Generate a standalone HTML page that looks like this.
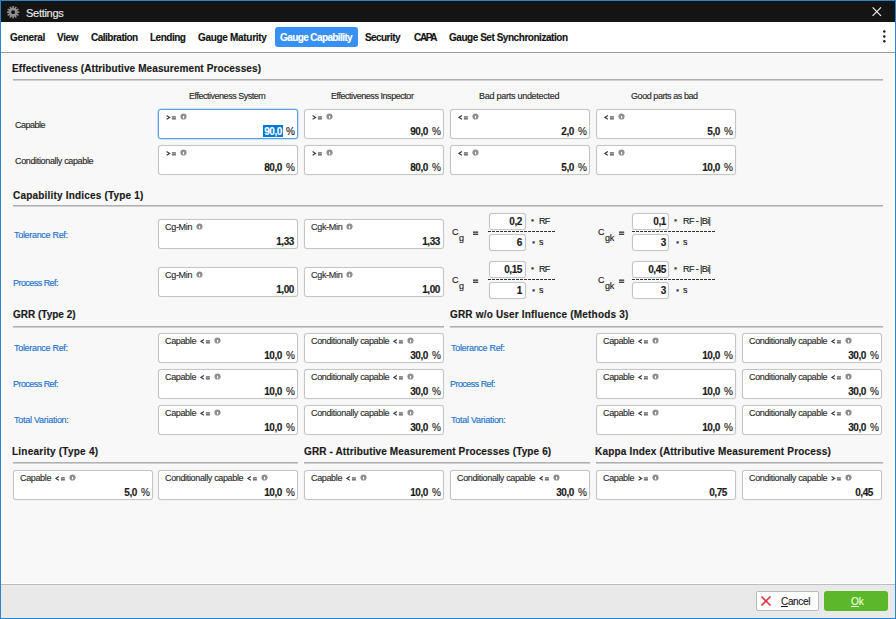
<!DOCTYPE html><html><head><meta charset="utf-8"><title>Settings</title><style>
*{margin:0;padding:0;box-sizing:border-box}
html,body{width:896px;height:619px;overflow:hidden;background:#f8f8f8}
body{position:relative;font-family:"Liberation Sans",sans-serif}
.t{position:absolute;white-space:nowrap;line-height:20px;-webkit-text-stroke:0.15px currentColor}
.ic{position:absolute}
.bx{position:absolute;background:#fff;border:1px solid #c5c5c5;border-radius:3px;box-shadow:0 0 1px rgba(0,0,0,.18)}
.bx.f{border-color:#5ea0e4;box-shadow:0 0 0 0.6px rgba(94,160,228,.55)}
.ln{position:absolute;height:1px;background:#b0b0b0;box-shadow:0 1px 0 #cfcfcf}
</style></head><body>
<div style="position:absolute;left:0;top:0;width:896px;height:619px;border:1px solid #2b83c9"></div>
<div style="position:absolute;left:1px;top:1px;width:894px;height:21px;background:#141414"></div>
<svg style="position:absolute;left:6px;top:5px" width="14" height="14" viewBox="0 0 14 14"><g fill="#8e8e8e" transform="translate(7.1 7.2)"><rect x="-0.8" y="-6.2" width="1.6" height="2.4" transform="rotate(0)"/><rect x="-0.8" y="-6.2" width="1.6" height="2.4" transform="rotate(30)"/><rect x="-0.8" y="-6.2" width="1.6" height="2.4" transform="rotate(60)"/><rect x="-0.8" y="-6.2" width="1.6" height="2.4" transform="rotate(90)"/><rect x="-0.8" y="-6.2" width="1.6" height="2.4" transform="rotate(120)"/><rect x="-0.8" y="-6.2" width="1.6" height="2.4" transform="rotate(150)"/><rect x="-0.8" y="-6.2" width="1.6" height="2.4" transform="rotate(180)"/><rect x="-0.8" y="-6.2" width="1.6" height="2.4" transform="rotate(210)"/><rect x="-0.8" y="-6.2" width="1.6" height="2.4" transform="rotate(240)"/><rect x="-0.8" y="-6.2" width="1.6" height="2.4" transform="rotate(270)"/><rect x="-0.8" y="-6.2" width="1.6" height="2.4" transform="rotate(300)"/><rect x="-0.8" y="-6.2" width="1.6" height="2.4" transform="rotate(330)"/><circle r="4.5"/></g><circle cx="7.1" cy="7.2" r="1.9" fill="#121212"/></svg>
<div class="t" style="left:26px;top:3px;font-size:11px;font-weight:normal;letter-spacing:-0.286px;color:#e8e8e8">Settings</div>
<svg style="position:absolute;left:871px;top:6px" width="11" height="11" viewBox="0 0 11 11"><path d="M1.6 1.4L10 9.8M10 1.4L1.6 9.8" stroke="#f0f0f0" stroke-width="1.2"/></svg>
<div style="position:absolute;left:1px;top:22px;width:894px;height:30px;background:#fff"></div>
<div style="position:absolute;left:1px;top:52px;width:894px;height:1px;background:#9c9c9c"></div>
<div style="position:absolute;left:275px;top:27px;width:83px;height:20px;background:#3790f3;border-radius:3px"></div>
<div class="t" style="left:10px;top:28px;font-size:10px;font-weight:bold;letter-spacing:-0.333px;color:#141414">General</div>
<div class="t" style="left:57px;top:28px;font-size:10px;font-weight:bold;letter-spacing:-0.333px;color:#141414">View</div>
<div class="t" style="left:91px;top:28px;font-size:10px;font-weight:bold;letter-spacing:-0.5px;color:#141414">Calibration</div>
<div class="t" style="left:150px;top:28px;font-size:10px;font-weight:bold;letter-spacing:-0.5px;color:#141414">Lending</div>
<div class="t" style="left:198px;top:28px;font-size:10px;font-weight:bold;letter-spacing:-0.308px;color:#141414">Gauge Maturity</div>
<div class="t" style="left:280px;top:28px;font-size:10px;font-weight:bold;letter-spacing:-0.6px;color:#ffffff">Gauge Capability</div>
<div class="t" style="left:365px;top:28px;font-size:10px;font-weight:bold;letter-spacing:-0.571px;color:#141414">Security</div>
<div class="t" style="left:414px;top:28px;font-size:10px;font-weight:bold;letter-spacing:-1.333px;color:#141414">CAPA</div>
<div class="t" style="left:449px;top:28px;font-size:10px;font-weight:bold;letter-spacing:-0.458px;color:#141414">Gauge Set Synchronization</div>
<svg style="position:absolute;left:881px;top:28px" width="6" height="16" viewBox="0 0 6 16"><circle cx="3.3" cy="3.6000000000000014" r="1.25" fill="#1a1a1a"/><circle cx="3.3" cy="8.399999999999999" r="1.25" fill="#1a1a1a"/><circle cx="3.3" cy="13.200000000000003" r="1.25" fill="#1a1a1a"/></svg>
<div style="position:absolute;left:893px;top:53px;width:2px;height:531px;background:#fff"></div>
<div style="position:absolute;left:1px;top:53px;width:1px;height:531px;background:#fff"></div>
<div class="t" style="left:12px;top:59px;font-size:10px;font-weight:bold;letter-spacing:0.104px;color:#1a1a1a">Effectiveness (Attributive Measurement Processes)</div>
<div class="ln" style="left:13px;top:79px;width:870px"></div>
<div class="t" style="left:189px;top:86px;font-size:9px;font-weight:normal;letter-spacing:-0.474px;color:#2a2a2a">Effectiveness System</div>
<div class="t" style="left:331px;top:86px;font-size:9px;font-weight:normal;letter-spacing:-0.455px;color:#2a2a2a">Effectiveness Inspector</div>
<div class="t" style="left:479px;top:86px;font-size:9px;font-weight:normal;letter-spacing:-0.263px;color:#2a2a2a">Bad parts undetected</div>
<div class="t" style="left:631px;top:86px;font-size:9px;font-weight:normal;letter-spacing:-0.438px;color:#2a2a2a">Good parts as bad</div>
<div class="t" style="left:15px;top:115px;font-size:9px;font-weight:normal;letter-spacing:-0.5px;color:#2a2a2a">Capable</div>
<div class="t" style="left:15px;top:151px;font-size:9px;font-weight:normal;letter-spacing:-0.35px;color:#2a2a2a">Conditionally capable</div>
<div class="bx f" style="left:158px;top:109px;width:140px;height:30px"></div>
<svg style="position:absolute;left:166px;top:112.5px" width="10" height="7" viewBox="0 0 10 7"><path d="M0.6 2.6L3.6 4.45L0.6 6.3" fill="none" stroke="#3a3a3a" stroke-width="1.15"/><rect x="5.9" y="3.4" width="4" height="1.1" fill="#3a3a3a"/><rect x="5.9" y="5.3" width="4" height="1.1" fill="#3a3a3a"/></svg>
<svg style="position:absolute;left:180px;top:113.3px" width="7" height="7" viewBox="0 0 7 7"><circle cx="3.5" cy="3.5" r="3.1" fill="#8f8f8f"/><rect x="3.0" y="2.9" width="1.1" height="2.5" fill="#fff"/></svg>
<div style="position:absolute;left:263px;top:125px;width:20px;height:12px;background:#0078d7"></div>
<div class="t r" style="right:614px;top:122px;font-size:10px;font-weight:bold;letter-spacing:-0.4px;color:#fff">90,0</div>
<div class="t r" style="right:601px;top:122px;font-size:10px;font-weight:normal;letter-spacing:0px;color:#1a1a1a">%</div>
<div class="bx" style="left:304px;top:109px;width:140px;height:30px"></div>
<svg style="position:absolute;left:312px;top:112.5px" width="10" height="7" viewBox="0 0 10 7"><path d="M0.6 2.6L3.6 4.45L0.6 6.3" fill="none" stroke="#3a3a3a" stroke-width="1.15"/><rect x="5.9" y="3.4" width="4" height="1.1" fill="#3a3a3a"/><rect x="5.9" y="5.3" width="4" height="1.1" fill="#3a3a3a"/></svg>
<svg style="position:absolute;left:326px;top:113.3px" width="7" height="7" viewBox="0 0 7 7"><circle cx="3.5" cy="3.5" r="3.1" fill="#8f8f8f"/><rect x="3.0" y="2.9" width="1.1" height="2.5" fill="#fff"/></svg>
<div class="t r" style="right:468px;top:122px;font-size:10px;font-weight:bold;letter-spacing:-0.4px;color:#1a1a1a">90,0</div>
<div class="t r" style="right:455px;top:122px;font-size:10px;font-weight:normal;letter-spacing:0px;color:#1a1a1a">%</div>
<div class="bx" style="left:450px;top:109px;width:140px;height:30px"></div>
<svg style="position:absolute;left:458px;top:112.5px" width="10" height="7" viewBox="0 0 10 7"><path d="M3.9 2.6L0.9 4.45L3.9 6.3" fill="none" stroke="#3a3a3a" stroke-width="1.15"/><rect x="5.9" y="3.4" width="4" height="1.1" fill="#3a3a3a"/><rect x="5.9" y="5.3" width="4" height="1.1" fill="#3a3a3a"/></svg>
<svg style="position:absolute;left:472px;top:113.3px" width="7" height="7" viewBox="0 0 7 7"><circle cx="3.5" cy="3.5" r="3.1" fill="#8f8f8f"/><rect x="3.0" y="2.9" width="1.1" height="2.5" fill="#fff"/></svg>
<div class="t r" style="right:322px;top:122px;font-size:10px;font-weight:bold;letter-spacing:-0.4px;color:#1a1a1a">2,0</div>
<div class="t r" style="right:309px;top:122px;font-size:10px;font-weight:normal;letter-spacing:0px;color:#1a1a1a">%</div>
<div class="bx" style="left:596px;top:109px;width:140px;height:30px"></div>
<svg style="position:absolute;left:604px;top:112.5px" width="10" height="7" viewBox="0 0 10 7"><path d="M3.9 2.6L0.9 4.45L3.9 6.3" fill="none" stroke="#3a3a3a" stroke-width="1.15"/><rect x="5.9" y="3.4" width="4" height="1.1" fill="#3a3a3a"/><rect x="5.9" y="5.3" width="4" height="1.1" fill="#3a3a3a"/></svg>
<svg style="position:absolute;left:618px;top:113.3px" width="7" height="7" viewBox="0 0 7 7"><circle cx="3.5" cy="3.5" r="3.1" fill="#8f8f8f"/><rect x="3.0" y="2.9" width="1.1" height="2.5" fill="#fff"/></svg>
<div class="t r" style="right:176px;top:122px;font-size:10px;font-weight:bold;letter-spacing:-0.4px;color:#1a1a1a">5,0</div>
<div class="t r" style="right:163px;top:122px;font-size:10px;font-weight:normal;letter-spacing:0px;color:#1a1a1a">%</div>
<div class="bx" style="left:158px;top:145px;width:140px;height:30px"></div>
<svg style="position:absolute;left:166px;top:148.5px" width="10" height="7" viewBox="0 0 10 7"><path d="M0.6 2.6L3.6 4.45L0.6 6.3" fill="none" stroke="#3a3a3a" stroke-width="1.15"/><rect x="5.9" y="3.4" width="4" height="1.1" fill="#3a3a3a"/><rect x="5.9" y="5.3" width="4" height="1.1" fill="#3a3a3a"/></svg>
<svg style="position:absolute;left:180px;top:149.3px" width="7" height="7" viewBox="0 0 7 7"><circle cx="3.5" cy="3.5" r="3.1" fill="#8f8f8f"/><rect x="3.0" y="2.9" width="1.1" height="2.5" fill="#fff"/></svg>
<div class="t r" style="right:614px;top:158px;font-size:10px;font-weight:bold;letter-spacing:-0.4px;color:#1a1a1a">80,0</div>
<div class="t r" style="right:601px;top:158px;font-size:10px;font-weight:normal;letter-spacing:0px;color:#1a1a1a">%</div>
<div class="bx" style="left:304px;top:145px;width:140px;height:30px"></div>
<svg style="position:absolute;left:312px;top:148.5px" width="10" height="7" viewBox="0 0 10 7"><path d="M0.6 2.6L3.6 4.45L0.6 6.3" fill="none" stroke="#3a3a3a" stroke-width="1.15"/><rect x="5.9" y="3.4" width="4" height="1.1" fill="#3a3a3a"/><rect x="5.9" y="5.3" width="4" height="1.1" fill="#3a3a3a"/></svg>
<svg style="position:absolute;left:326px;top:149.3px" width="7" height="7" viewBox="0 0 7 7"><circle cx="3.5" cy="3.5" r="3.1" fill="#8f8f8f"/><rect x="3.0" y="2.9" width="1.1" height="2.5" fill="#fff"/></svg>
<div class="t r" style="right:468px;top:158px;font-size:10px;font-weight:bold;letter-spacing:-0.4px;color:#1a1a1a">80,0</div>
<div class="t r" style="right:455px;top:158px;font-size:10px;font-weight:normal;letter-spacing:0px;color:#1a1a1a">%</div>
<div class="bx" style="left:450px;top:145px;width:140px;height:30px"></div>
<svg style="position:absolute;left:458px;top:148.5px" width="10" height="7" viewBox="0 0 10 7"><path d="M3.9 2.6L0.9 4.45L3.9 6.3" fill="none" stroke="#3a3a3a" stroke-width="1.15"/><rect x="5.9" y="3.4" width="4" height="1.1" fill="#3a3a3a"/><rect x="5.9" y="5.3" width="4" height="1.1" fill="#3a3a3a"/></svg>
<svg style="position:absolute;left:472px;top:149.3px" width="7" height="7" viewBox="0 0 7 7"><circle cx="3.5" cy="3.5" r="3.1" fill="#8f8f8f"/><rect x="3.0" y="2.9" width="1.1" height="2.5" fill="#fff"/></svg>
<div class="t r" style="right:322px;top:158px;font-size:10px;font-weight:bold;letter-spacing:-0.4px;color:#1a1a1a">5,0</div>
<div class="t r" style="right:309px;top:158px;font-size:10px;font-weight:normal;letter-spacing:0px;color:#1a1a1a">%</div>
<div class="bx" style="left:596px;top:145px;width:140px;height:30px"></div>
<svg style="position:absolute;left:604px;top:148.5px" width="10" height="7" viewBox="0 0 10 7"><path d="M3.9 2.6L0.9 4.45L3.9 6.3" fill="none" stroke="#3a3a3a" stroke-width="1.15"/><rect x="5.9" y="3.4" width="4" height="1.1" fill="#3a3a3a"/><rect x="5.9" y="5.3" width="4" height="1.1" fill="#3a3a3a"/></svg>
<svg style="position:absolute;left:618px;top:149.3px" width="7" height="7" viewBox="0 0 7 7"><circle cx="3.5" cy="3.5" r="3.1" fill="#8f8f8f"/><rect x="3.0" y="2.9" width="1.1" height="2.5" fill="#fff"/></svg>
<div class="t r" style="right:176px;top:158px;font-size:10px;font-weight:bold;letter-spacing:-0.4px;color:#1a1a1a">10,0</div>
<div class="t r" style="right:163px;top:158px;font-size:10px;font-weight:normal;letter-spacing:0px;color:#1a1a1a">%</div>
<div class="t" style="left:13px;top:186px;font-size:10px;font-weight:bold;letter-spacing:0.192px;color:#1a1a1a">Capability Indices (Type 1)</div>
<div class="ln" style="left:13px;top:205px;width:870px"></div>
<div class="t" style="left:14px;top:225px;font-size:9px;font-weight:normal;letter-spacing:-0.308px;color:#1f72cc">Tolerance Ref:</div>
<div class="t" style="left:13px;top:273px;font-size:9px;font-weight:normal;letter-spacing:-0.545px;color:#1f72cc">Process Ref:</div>
<div class="bx" style="left:158px;top:219px;width:140px;height:30px"></div>
<div class="t" style="left:165px;top:217px;font-size:9px;letter-spacing:-0.3px;color:#2e2e2e">Cg-Min<svg style="display:inline-block;vertical-align:0.4px;margin-left:4px" width="7" height="7" viewBox="0 0 7 7"><circle cx="3.5" cy="3.5" r="3.1" fill="#8f8f8f"/><rect x="3.0" y="2.9" width="1.1" height="2.5" fill="#fff"/></svg></div>
<div class="t r" style="right:602px;top:232px;font-size:10px;font-weight:bold;letter-spacing:-0.4px;color:#1a1a1a">1,33</div>
<div class="bx" style="left:304px;top:219px;width:140px;height:30px"></div>
<div class="t" style="left:311px;top:217px;font-size:9px;letter-spacing:-0.3px;color:#2e2e2e">Cgk-Min<svg style="display:inline-block;vertical-align:0.4px;margin-left:4px" width="7" height="7" viewBox="0 0 7 7"><circle cx="3.5" cy="3.5" r="3.1" fill="#8f8f8f"/><rect x="3.0" y="2.9" width="1.1" height="2.5" fill="#fff"/></svg></div>
<div class="t r" style="right:456px;top:232px;font-size:10px;font-weight:bold;letter-spacing:-0.4px;color:#1a1a1a">1,33</div>
<div class="t" style="left:452px;top:222px;font-size:9px;letter-spacing:0px;color:#1a1a1a">C</div>
<div class="t" style="left:459px;top:228px;font-size:9px;letter-spacing:0px;color:#222">g</div>
<svg style="position:absolute;left:473px;top:231px" width="6" height="5" viewBox="0 0 6 5"><rect x="0" y="0.5" width="5.2" height="1.3" fill="#333"/><rect x="0" y="2.6" width="5.2" height="1.3" fill="#333"/></svg>
<div class="bx" style="left:489px;top:213px;width:37px;height:17px"></div>
<div class="bx" style="left:489px;top:234px;width:37px;height:17px"></div>
<div style="position:absolute;left:488px;top:231px;width:68px;height:1px;background:repeating-linear-gradient(90deg,#333 0 3px,transparent 3px 4px)"></div>
<div class="t r" style="right:374px;top:212px;font-size:10px;font-weight:bold;letter-spacing:-0.4px;color:#1a1a1a">0,2</div>
<div class="t r" style="right:374px;top:233px;font-size:10px;font-weight:bold;letter-spacing:-0.4px;color:#1a1a1a">6</div>
<div class="t" style="left:531px;top:212px;font-size:8px;letter-spacing:0px;color:#222">*</div>
<div class="t" style="left:539px;top:211px;font-size:9px;letter-spacing:-0.8px;color:#222">RF</div>
<div class="t" style="left:532px;top:234px;font-size:8px;letter-spacing:0px;color:#222">*</div>
<div class="t" style="left:539px;top:232px;font-size:9px;letter-spacing:0px;color:#222">s</div>
<div class="t" style="left:598px;top:222px;font-size:9px;letter-spacing:0px;color:#1a1a1a">C</div>
<div class="t" style="left:605px;top:228px;font-size:9px;letter-spacing:-0.2px;color:#222">gk</div>
<svg style="position:absolute;left:619px;top:231px" width="6" height="5" viewBox="0 0 6 5"><rect x="0" y="0.5" width="5.2" height="1.3" fill="#333"/><rect x="0" y="2.6" width="5.2" height="1.3" fill="#333"/></svg>
<div class="bx" style="left:632px;top:213px;width:37px;height:17px"></div>
<div class="bx" style="left:632px;top:234px;width:37px;height:17px"></div>
<div style="position:absolute;left:632px;top:231px;width:84px;height:1px;background:repeating-linear-gradient(90deg,#333 0 3px,transparent 3px 4px)"></div>
<div class="t r" style="right:230px;top:212px;font-size:10px;font-weight:bold;letter-spacing:-0.4px;color:#1a1a1a">0,1</div>
<div class="t r" style="right:230px;top:233px;font-size:10px;font-weight:bold;letter-spacing:-0.4px;color:#1a1a1a">3</div>
<div class="t" style="left:674px;top:212px;font-size:8px;letter-spacing:0px;color:#222">*</div>
<div class="t" style="left:683px;top:211px;font-size:9px;letter-spacing:-0.6px;color:#222">RF - |Bi|</div>
<div class="t" style="left:676px;top:234px;font-size:8px;letter-spacing:0px;color:#222">*</div>
<div class="t" style="left:683px;top:232px;font-size:9px;letter-spacing:0px;color:#222">s</div>
<div class="bx" style="left:158px;top:267px;width:140px;height:30px"></div>
<div class="t" style="left:165px;top:265px;font-size:9px;letter-spacing:-0.3px;color:#2e2e2e">Cg-Min<svg style="display:inline-block;vertical-align:0.4px;margin-left:4px" width="7" height="7" viewBox="0 0 7 7"><circle cx="3.5" cy="3.5" r="3.1" fill="#8f8f8f"/><rect x="3.0" y="2.9" width="1.1" height="2.5" fill="#fff"/></svg></div>
<div class="t r" style="right:602px;top:280px;font-size:10px;font-weight:bold;letter-spacing:-0.4px;color:#1a1a1a">1,00</div>
<div class="bx" style="left:304px;top:267px;width:140px;height:30px"></div>
<div class="t" style="left:311px;top:265px;font-size:9px;letter-spacing:-0.3px;color:#2e2e2e">Cgk-Min<svg style="display:inline-block;vertical-align:0.4px;margin-left:4px" width="7" height="7" viewBox="0 0 7 7"><circle cx="3.5" cy="3.5" r="3.1" fill="#8f8f8f"/><rect x="3.0" y="2.9" width="1.1" height="2.5" fill="#fff"/></svg></div>
<div class="t r" style="right:456px;top:280px;font-size:10px;font-weight:bold;letter-spacing:-0.4px;color:#1a1a1a">1,00</div>
<div class="t" style="left:452px;top:270px;font-size:9px;letter-spacing:0px;color:#1a1a1a">C</div>
<div class="t" style="left:459px;top:276px;font-size:9px;letter-spacing:0px;color:#222">g</div>
<svg style="position:absolute;left:473px;top:279px" width="6" height="5" viewBox="0 0 6 5"><rect x="0" y="0.5" width="5.2" height="1.3" fill="#333"/><rect x="0" y="2.6" width="5.2" height="1.3" fill="#333"/></svg>
<div class="bx" style="left:489px;top:261px;width:37px;height:17px"></div>
<div class="bx" style="left:489px;top:282px;width:37px;height:17px"></div>
<div style="position:absolute;left:488px;top:279px;width:68px;height:1px;background:repeating-linear-gradient(90deg,#333 0 3px,transparent 3px 4px)"></div>
<div class="t r" style="right:374px;top:260px;font-size:10px;font-weight:bold;letter-spacing:-0.4px;color:#1a1a1a">0,15</div>
<div class="t r" style="right:374px;top:281px;font-size:10px;font-weight:bold;letter-spacing:-0.4px;color:#1a1a1a">1</div>
<div class="t" style="left:531px;top:260px;font-size:8px;letter-spacing:0px;color:#222">*</div>
<div class="t" style="left:539px;top:259px;font-size:9px;letter-spacing:-0.8px;color:#222">RF</div>
<div class="t" style="left:532px;top:282px;font-size:8px;letter-spacing:0px;color:#222">*</div>
<div class="t" style="left:539px;top:280px;font-size:9px;letter-spacing:0px;color:#222">s</div>
<div class="t" style="left:598px;top:270px;font-size:9px;letter-spacing:0px;color:#1a1a1a">C</div>
<div class="t" style="left:605px;top:276px;font-size:9px;letter-spacing:-0.2px;color:#222">gk</div>
<svg style="position:absolute;left:619px;top:279px" width="6" height="5" viewBox="0 0 6 5"><rect x="0" y="0.5" width="5.2" height="1.3" fill="#333"/><rect x="0" y="2.6" width="5.2" height="1.3" fill="#333"/></svg>
<div class="bx" style="left:632px;top:261px;width:37px;height:17px"></div>
<div class="bx" style="left:632px;top:282px;width:37px;height:17px"></div>
<div style="position:absolute;left:632px;top:279px;width:84px;height:1px;background:repeating-linear-gradient(90deg,#333 0 3px,transparent 3px 4px)"></div>
<div class="t r" style="right:230px;top:260px;font-size:10px;font-weight:bold;letter-spacing:-0.4px;color:#1a1a1a">0,45</div>
<div class="t r" style="right:230px;top:281px;font-size:10px;font-weight:bold;letter-spacing:-0.4px;color:#1a1a1a">3</div>
<div class="t" style="left:674px;top:260px;font-size:8px;letter-spacing:0px;color:#222">*</div>
<div class="t" style="left:683px;top:259px;font-size:9px;letter-spacing:-0.6px;color:#222">RF - |Bi|</div>
<div class="t" style="left:676px;top:282px;font-size:8px;letter-spacing:0px;color:#222">*</div>
<div class="t" style="left:683px;top:280px;font-size:9px;letter-spacing:0px;color:#222">s</div>
<div class="t" style="left:13px;top:305px;font-size:10px;font-weight:bold;letter-spacing:0.0px;color:#1a1a1a">GRR (Type 2)</div>
<div class="t" style="left:450px;top:305px;font-size:10px;font-weight:bold;letter-spacing:0.182px;color:#1a1a1a">GRR w/o User Influence (Methods 3)</div>
<div class="ln" style="left:13px;top:326px;width:431px"></div>
<div class="ln" style="left:450px;top:326px;width:433px"></div>
<div class="t" style="left:14px;top:338px;font-size:9px;font-weight:normal;letter-spacing:-0.308px;color:#1f72cc">Tolerance Ref:</div>
<div class="t" style="left:13px;top:374px;font-size:9px;font-weight:normal;letter-spacing:-0.545px;color:#1f72cc">Process Ref:</div>
<div class="t" style="left:14px;top:410px;font-size:9px;font-weight:normal;letter-spacing:-0.267px;color:#1f72cc">Total Variation:</div>
<div class="t" style="left:451px;top:338px;font-size:9px;font-weight:normal;letter-spacing:-0.308px;color:#1f72cc">Tolerance Ref:</div>
<div class="t" style="left:450px;top:374px;font-size:9px;font-weight:normal;letter-spacing:-0.545px;color:#1f72cc">Process Ref:</div>
<div class="t" style="left:451px;top:410px;font-size:9px;font-weight:normal;letter-spacing:-0.267px;color:#1f72cc">Total Variation:</div>
<div class="bx" style="left:158px;top:333px;width:140px;height:30px"></div>
<div class="t" style="left:165px;top:331px;font-size:9px;letter-spacing:-0.35px;color:#2e2e2e">Capable<svg style="display:inline-block;vertical-align:0.5px;margin-left:4.2px" width="10" height="7" viewBox="0 0 10 7"><path d="M3.9 2.6L0.9 4.45L3.9 6.3" fill="none" stroke="#3a3a3a" stroke-width="1.15"/><rect x="5.9" y="3.4" width="4" height="1.1" fill="#3a3a3a"/><rect x="5.9" y="5.3" width="4" height="1.1" fill="#3a3a3a"/></svg><svg style="display:inline-block;vertical-align:0.4px;margin-left:3.8px" width="7" height="7" viewBox="0 0 7 7"><circle cx="3.5" cy="3.5" r="3.1" fill="#8f8f8f"/><rect x="3.0" y="2.9" width="1.1" height="2.5" fill="#fff"/></svg></div>
<div class="t r" style="right:614px;top:346px;font-size:10px;font-weight:bold;letter-spacing:-0.4px;color:#1a1a1a">10,0</div>
<div class="t r" style="right:601px;top:346px;font-size:10px;font-weight:normal;letter-spacing:0px;color:#1a1a1a">%</div>
<div class="bx" style="left:304px;top:333px;width:140px;height:30px"></div>
<div class="t" style="left:311px;top:331px;font-size:9px;letter-spacing:-0.35px;color:#2e2e2e">Conditionally capable<svg style="display:inline-block;vertical-align:0.5px;margin-left:4.2px" width="10" height="7" viewBox="0 0 10 7"><path d="M3.9 2.6L0.9 4.45L3.9 6.3" fill="none" stroke="#3a3a3a" stroke-width="1.15"/><rect x="5.9" y="3.4" width="4" height="1.1" fill="#3a3a3a"/><rect x="5.9" y="5.3" width="4" height="1.1" fill="#3a3a3a"/></svg><svg style="display:inline-block;vertical-align:0.4px;margin-left:3.8px" width="7" height="7" viewBox="0 0 7 7"><circle cx="3.5" cy="3.5" r="3.1" fill="#8f8f8f"/><rect x="3.0" y="2.9" width="1.1" height="2.5" fill="#fff"/></svg></div>
<div class="t r" style="right:468px;top:346px;font-size:10px;font-weight:bold;letter-spacing:-0.4px;color:#1a1a1a">30,0</div>
<div class="t r" style="right:455px;top:346px;font-size:10px;font-weight:normal;letter-spacing:0px;color:#1a1a1a">%</div>
<div class="bx" style="left:596px;top:333px;width:140px;height:30px"></div>
<div class="t" style="left:603px;top:331px;font-size:9px;letter-spacing:-0.35px;color:#2e2e2e">Capable<svg style="display:inline-block;vertical-align:0.5px;margin-left:4.2px" width="10" height="7" viewBox="0 0 10 7"><path d="M3.9 2.6L0.9 4.45L3.9 6.3" fill="none" stroke="#3a3a3a" stroke-width="1.15"/><rect x="5.9" y="3.4" width="4" height="1.1" fill="#3a3a3a"/><rect x="5.9" y="5.3" width="4" height="1.1" fill="#3a3a3a"/></svg><svg style="display:inline-block;vertical-align:0.4px;margin-left:3.8px" width="7" height="7" viewBox="0 0 7 7"><circle cx="3.5" cy="3.5" r="3.1" fill="#8f8f8f"/><rect x="3.0" y="2.9" width="1.1" height="2.5" fill="#fff"/></svg></div>
<div class="t r" style="right:176px;top:346px;font-size:10px;font-weight:bold;letter-spacing:-0.4px;color:#1a1a1a">10,0</div>
<div class="t r" style="right:163px;top:346px;font-size:10px;font-weight:normal;letter-spacing:0px;color:#1a1a1a">%</div>
<div class="bx" style="left:742px;top:333px;width:140px;height:30px"></div>
<div class="t" style="left:749px;top:331px;font-size:9px;letter-spacing:-0.35px;color:#2e2e2e">Conditionally capable<svg style="display:inline-block;vertical-align:0.5px;margin-left:4.2px" width="10" height="7" viewBox="0 0 10 7"><path d="M3.9 2.6L0.9 4.45L3.9 6.3" fill="none" stroke="#3a3a3a" stroke-width="1.15"/><rect x="5.9" y="3.4" width="4" height="1.1" fill="#3a3a3a"/><rect x="5.9" y="5.3" width="4" height="1.1" fill="#3a3a3a"/></svg><svg style="display:inline-block;vertical-align:0.4px;margin-left:3.8px" width="7" height="7" viewBox="0 0 7 7"><circle cx="3.5" cy="3.5" r="3.1" fill="#8f8f8f"/><rect x="3.0" y="2.9" width="1.1" height="2.5" fill="#fff"/></svg></div>
<div class="t r" style="right:30px;top:346px;font-size:10px;font-weight:bold;letter-spacing:-0.4px;color:#1a1a1a">30,0</div>
<div class="t r" style="right:17px;top:346px;font-size:10px;font-weight:normal;letter-spacing:0px;color:#1a1a1a">%</div>
<div class="bx" style="left:158px;top:369px;width:140px;height:30px"></div>
<div class="t" style="left:165px;top:367px;font-size:9px;letter-spacing:-0.35px;color:#2e2e2e">Capable<svg style="display:inline-block;vertical-align:0.5px;margin-left:4.2px" width="10" height="7" viewBox="0 0 10 7"><path d="M3.9 2.6L0.9 4.45L3.9 6.3" fill="none" stroke="#3a3a3a" stroke-width="1.15"/><rect x="5.9" y="3.4" width="4" height="1.1" fill="#3a3a3a"/><rect x="5.9" y="5.3" width="4" height="1.1" fill="#3a3a3a"/></svg><svg style="display:inline-block;vertical-align:0.4px;margin-left:3.8px" width="7" height="7" viewBox="0 0 7 7"><circle cx="3.5" cy="3.5" r="3.1" fill="#8f8f8f"/><rect x="3.0" y="2.9" width="1.1" height="2.5" fill="#fff"/></svg></div>
<div class="t r" style="right:614px;top:382px;font-size:10px;font-weight:bold;letter-spacing:-0.4px;color:#1a1a1a">10,0</div>
<div class="t r" style="right:601px;top:382px;font-size:10px;font-weight:normal;letter-spacing:0px;color:#1a1a1a">%</div>
<div class="bx" style="left:304px;top:369px;width:140px;height:30px"></div>
<div class="t" style="left:311px;top:367px;font-size:9px;letter-spacing:-0.35px;color:#2e2e2e">Conditionally capable<svg style="display:inline-block;vertical-align:0.5px;margin-left:4.2px" width="10" height="7" viewBox="0 0 10 7"><path d="M3.9 2.6L0.9 4.45L3.9 6.3" fill="none" stroke="#3a3a3a" stroke-width="1.15"/><rect x="5.9" y="3.4" width="4" height="1.1" fill="#3a3a3a"/><rect x="5.9" y="5.3" width="4" height="1.1" fill="#3a3a3a"/></svg><svg style="display:inline-block;vertical-align:0.4px;margin-left:3.8px" width="7" height="7" viewBox="0 0 7 7"><circle cx="3.5" cy="3.5" r="3.1" fill="#8f8f8f"/><rect x="3.0" y="2.9" width="1.1" height="2.5" fill="#fff"/></svg></div>
<div class="t r" style="right:468px;top:382px;font-size:10px;font-weight:bold;letter-spacing:-0.4px;color:#1a1a1a">30,0</div>
<div class="t r" style="right:455px;top:382px;font-size:10px;font-weight:normal;letter-spacing:0px;color:#1a1a1a">%</div>
<div class="bx" style="left:596px;top:369px;width:140px;height:30px"></div>
<div class="t" style="left:603px;top:367px;font-size:9px;letter-spacing:-0.35px;color:#2e2e2e">Capable<svg style="display:inline-block;vertical-align:0.5px;margin-left:4.2px" width="10" height="7" viewBox="0 0 10 7"><path d="M3.9 2.6L0.9 4.45L3.9 6.3" fill="none" stroke="#3a3a3a" stroke-width="1.15"/><rect x="5.9" y="3.4" width="4" height="1.1" fill="#3a3a3a"/><rect x="5.9" y="5.3" width="4" height="1.1" fill="#3a3a3a"/></svg><svg style="display:inline-block;vertical-align:0.4px;margin-left:3.8px" width="7" height="7" viewBox="0 0 7 7"><circle cx="3.5" cy="3.5" r="3.1" fill="#8f8f8f"/><rect x="3.0" y="2.9" width="1.1" height="2.5" fill="#fff"/></svg></div>
<div class="t r" style="right:176px;top:382px;font-size:10px;font-weight:bold;letter-spacing:-0.4px;color:#1a1a1a">10,0</div>
<div class="t r" style="right:163px;top:382px;font-size:10px;font-weight:normal;letter-spacing:0px;color:#1a1a1a">%</div>
<div class="bx" style="left:742px;top:369px;width:140px;height:30px"></div>
<div class="t" style="left:749px;top:367px;font-size:9px;letter-spacing:-0.35px;color:#2e2e2e">Conditionally capable<svg style="display:inline-block;vertical-align:0.5px;margin-left:4.2px" width="10" height="7" viewBox="0 0 10 7"><path d="M3.9 2.6L0.9 4.45L3.9 6.3" fill="none" stroke="#3a3a3a" stroke-width="1.15"/><rect x="5.9" y="3.4" width="4" height="1.1" fill="#3a3a3a"/><rect x="5.9" y="5.3" width="4" height="1.1" fill="#3a3a3a"/></svg><svg style="display:inline-block;vertical-align:0.4px;margin-left:3.8px" width="7" height="7" viewBox="0 0 7 7"><circle cx="3.5" cy="3.5" r="3.1" fill="#8f8f8f"/><rect x="3.0" y="2.9" width="1.1" height="2.5" fill="#fff"/></svg></div>
<div class="t r" style="right:30px;top:382px;font-size:10px;font-weight:bold;letter-spacing:-0.4px;color:#1a1a1a">30,0</div>
<div class="t r" style="right:17px;top:382px;font-size:10px;font-weight:normal;letter-spacing:0px;color:#1a1a1a">%</div>
<div class="bx" style="left:158px;top:405px;width:140px;height:30px"></div>
<div class="t" style="left:165px;top:403px;font-size:9px;letter-spacing:-0.35px;color:#2e2e2e">Capable<svg style="display:inline-block;vertical-align:0.5px;margin-left:4.2px" width="10" height="7" viewBox="0 0 10 7"><path d="M3.9 2.6L0.9 4.45L3.9 6.3" fill="none" stroke="#3a3a3a" stroke-width="1.15"/><rect x="5.9" y="3.4" width="4" height="1.1" fill="#3a3a3a"/><rect x="5.9" y="5.3" width="4" height="1.1" fill="#3a3a3a"/></svg><svg style="display:inline-block;vertical-align:0.4px;margin-left:3.8px" width="7" height="7" viewBox="0 0 7 7"><circle cx="3.5" cy="3.5" r="3.1" fill="#8f8f8f"/><rect x="3.0" y="2.9" width="1.1" height="2.5" fill="#fff"/></svg></div>
<div class="t r" style="right:614px;top:418px;font-size:10px;font-weight:bold;letter-spacing:-0.4px;color:#1a1a1a">10,0</div>
<div class="t r" style="right:601px;top:418px;font-size:10px;font-weight:normal;letter-spacing:0px;color:#1a1a1a">%</div>
<div class="bx" style="left:304px;top:405px;width:140px;height:30px"></div>
<div class="t" style="left:311px;top:403px;font-size:9px;letter-spacing:-0.35px;color:#2e2e2e">Conditionally capable<svg style="display:inline-block;vertical-align:0.5px;margin-left:4.2px" width="10" height="7" viewBox="0 0 10 7"><path d="M3.9 2.6L0.9 4.45L3.9 6.3" fill="none" stroke="#3a3a3a" stroke-width="1.15"/><rect x="5.9" y="3.4" width="4" height="1.1" fill="#3a3a3a"/><rect x="5.9" y="5.3" width="4" height="1.1" fill="#3a3a3a"/></svg><svg style="display:inline-block;vertical-align:0.4px;margin-left:3.8px" width="7" height="7" viewBox="0 0 7 7"><circle cx="3.5" cy="3.5" r="3.1" fill="#8f8f8f"/><rect x="3.0" y="2.9" width="1.1" height="2.5" fill="#fff"/></svg></div>
<div class="t r" style="right:468px;top:418px;font-size:10px;font-weight:bold;letter-spacing:-0.4px;color:#1a1a1a">30,0</div>
<div class="t r" style="right:455px;top:418px;font-size:10px;font-weight:normal;letter-spacing:0px;color:#1a1a1a">%</div>
<div class="bx" style="left:596px;top:405px;width:140px;height:30px"></div>
<div class="t" style="left:603px;top:403px;font-size:9px;letter-spacing:-0.35px;color:#2e2e2e">Capable<svg style="display:inline-block;vertical-align:0.5px;margin-left:4.2px" width="10" height="7" viewBox="0 0 10 7"><path d="M3.9 2.6L0.9 4.45L3.9 6.3" fill="none" stroke="#3a3a3a" stroke-width="1.15"/><rect x="5.9" y="3.4" width="4" height="1.1" fill="#3a3a3a"/><rect x="5.9" y="5.3" width="4" height="1.1" fill="#3a3a3a"/></svg><svg style="display:inline-block;vertical-align:0.4px;margin-left:3.8px" width="7" height="7" viewBox="0 0 7 7"><circle cx="3.5" cy="3.5" r="3.1" fill="#8f8f8f"/><rect x="3.0" y="2.9" width="1.1" height="2.5" fill="#fff"/></svg></div>
<div class="t r" style="right:176px;top:418px;font-size:10px;font-weight:bold;letter-spacing:-0.4px;color:#1a1a1a">10,0</div>
<div class="t r" style="right:163px;top:418px;font-size:10px;font-weight:normal;letter-spacing:0px;color:#1a1a1a">%</div>
<div class="bx" style="left:742px;top:405px;width:140px;height:30px"></div>
<div class="t" style="left:749px;top:403px;font-size:9px;letter-spacing:-0.35px;color:#2e2e2e">Conditionally capable<svg style="display:inline-block;vertical-align:0.5px;margin-left:4.2px" width="10" height="7" viewBox="0 0 10 7"><path d="M3.9 2.6L0.9 4.45L3.9 6.3" fill="none" stroke="#3a3a3a" stroke-width="1.15"/><rect x="5.9" y="3.4" width="4" height="1.1" fill="#3a3a3a"/><rect x="5.9" y="5.3" width="4" height="1.1" fill="#3a3a3a"/></svg><svg style="display:inline-block;vertical-align:0.4px;margin-left:3.8px" width="7" height="7" viewBox="0 0 7 7"><circle cx="3.5" cy="3.5" r="3.1" fill="#8f8f8f"/><rect x="3.0" y="2.9" width="1.1" height="2.5" fill="#fff"/></svg></div>
<div class="t r" style="right:30px;top:418px;font-size:10px;font-weight:bold;letter-spacing:-0.4px;color:#1a1a1a">30,0</div>
<div class="t r" style="right:17px;top:418px;font-size:10px;font-weight:normal;letter-spacing:0px;color:#1a1a1a">%</div>
<div class="t" style="left:12px;top:442px;font-size:10px;font-weight:bold;letter-spacing:0.235px;color:#1a1a1a">Linearity (Type 4)</div>
<div class="t" style="left:304px;top:442px;font-size:10px;font-weight:bold;letter-spacing:0.128px;color:#1a1a1a">GRR - Attributive Measurement Processes (Type 6)</div>
<div class="t" style="left:595px;top:442px;font-size:10px;font-weight:bold;letter-spacing:0.182px;color:#1a1a1a">Kappa Index (Attributive Measurement Process)</div>
<div class="ln" style="left:13px;top:462px;width:285px"></div>
<div class="ln" style="left:304px;top:462px;width:286px"></div>
<div class="ln" style="left:596px;top:462px;width:287px"></div>
<div class="bx" style="left:13px;top:470px;width:140px;height:30px"></div>
<div class="t" style="left:20px;top:468px;font-size:9px;letter-spacing:-0.35px;color:#2e2e2e">Capable<svg style="display:inline-block;vertical-align:0.5px;margin-left:4.2px" width="10" height="7" viewBox="0 0 10 7"><path d="M3.9 2.6L0.9 4.45L3.9 6.3" fill="none" stroke="#3a3a3a" stroke-width="1.15"/><rect x="5.9" y="3.4" width="4" height="1.1" fill="#3a3a3a"/><rect x="5.9" y="5.3" width="4" height="1.1" fill="#3a3a3a"/></svg><svg style="display:inline-block;vertical-align:0.4px;margin-left:3.8px" width="7" height="7" viewBox="0 0 7 7"><circle cx="3.5" cy="3.5" r="3.1" fill="#8f8f8f"/><rect x="3.0" y="2.9" width="1.1" height="2.5" fill="#fff"/></svg></div>
<div class="t r" style="right:759px;top:483px;font-size:10px;font-weight:bold;letter-spacing:-0.4px;color:#1a1a1a">5,0</div>
<div class="t r" style="right:746px;top:483px;font-size:10px;font-weight:normal;letter-spacing:0px;color:#1a1a1a">%</div>
<div class="bx" style="left:158px;top:470px;width:140px;height:30px"></div>
<div class="t" style="left:165px;top:468px;font-size:9px;letter-spacing:-0.35px;color:#2e2e2e">Conditionally capable<svg style="display:inline-block;vertical-align:0.5px;margin-left:4.2px" width="10" height="7" viewBox="0 0 10 7"><path d="M3.9 2.6L0.9 4.45L3.9 6.3" fill="none" stroke="#3a3a3a" stroke-width="1.15"/><rect x="5.9" y="3.4" width="4" height="1.1" fill="#3a3a3a"/><rect x="5.9" y="5.3" width="4" height="1.1" fill="#3a3a3a"/></svg><svg style="display:inline-block;vertical-align:0.4px;margin-left:3.8px" width="7" height="7" viewBox="0 0 7 7"><circle cx="3.5" cy="3.5" r="3.1" fill="#8f8f8f"/><rect x="3.0" y="2.9" width="1.1" height="2.5" fill="#fff"/></svg></div>
<div class="t r" style="right:614px;top:483px;font-size:10px;font-weight:bold;letter-spacing:-0.4px;color:#1a1a1a">10,0</div>
<div class="t r" style="right:601px;top:483px;font-size:10px;font-weight:normal;letter-spacing:0px;color:#1a1a1a">%</div>
<div class="bx" style="left:304px;top:470px;width:140px;height:30px"></div>
<div class="t" style="left:311px;top:468px;font-size:9px;letter-spacing:-0.35px;color:#2e2e2e">Capable<svg style="display:inline-block;vertical-align:0.5px;margin-left:4.2px" width="10" height="7" viewBox="0 0 10 7"><path d="M3.9 2.6L0.9 4.45L3.9 6.3" fill="none" stroke="#3a3a3a" stroke-width="1.15"/><rect x="5.9" y="3.4" width="4" height="1.1" fill="#3a3a3a"/><rect x="5.9" y="5.3" width="4" height="1.1" fill="#3a3a3a"/></svg><svg style="display:inline-block;vertical-align:0.4px;margin-left:3.8px" width="7" height="7" viewBox="0 0 7 7"><circle cx="3.5" cy="3.5" r="3.1" fill="#8f8f8f"/><rect x="3.0" y="2.9" width="1.1" height="2.5" fill="#fff"/></svg></div>
<div class="t r" style="right:468px;top:483px;font-size:10px;font-weight:bold;letter-spacing:-0.4px;color:#1a1a1a">10,0</div>
<div class="t r" style="right:455px;top:483px;font-size:10px;font-weight:normal;letter-spacing:0px;color:#1a1a1a">%</div>
<div class="bx" style="left:450px;top:470px;width:140px;height:30px"></div>
<div class="t" style="left:457px;top:468px;font-size:9px;letter-spacing:-0.35px;color:#2e2e2e">Conditionally capable<svg style="display:inline-block;vertical-align:0.5px;margin-left:4.2px" width="10" height="7" viewBox="0 0 10 7"><path d="M3.9 2.6L0.9 4.45L3.9 6.3" fill="none" stroke="#3a3a3a" stroke-width="1.15"/><rect x="5.9" y="3.4" width="4" height="1.1" fill="#3a3a3a"/><rect x="5.9" y="5.3" width="4" height="1.1" fill="#3a3a3a"/></svg><svg style="display:inline-block;vertical-align:0.4px;margin-left:3.8px" width="7" height="7" viewBox="0 0 7 7"><circle cx="3.5" cy="3.5" r="3.1" fill="#8f8f8f"/><rect x="3.0" y="2.9" width="1.1" height="2.5" fill="#fff"/></svg></div>
<div class="t r" style="right:322px;top:483px;font-size:10px;font-weight:bold;letter-spacing:-0.4px;color:#1a1a1a">30,0</div>
<div class="t r" style="right:309px;top:483px;font-size:10px;font-weight:normal;letter-spacing:0px;color:#1a1a1a">%</div>
<div class="bx" style="left:596px;top:470px;width:140px;height:30px"></div>
<div class="t" style="left:603px;top:468px;font-size:9px;letter-spacing:-0.35px;color:#2e2e2e">Capable<svg style="display:inline-block;vertical-align:0.5px;margin-left:4.2px" width="10" height="7" viewBox="0 0 10 7"><path d="M0.6 2.6L3.6 4.45L0.6 6.3" fill="none" stroke="#3a3a3a" stroke-width="1.15"/><rect x="5.9" y="3.4" width="4" height="1.1" fill="#3a3a3a"/><rect x="5.9" y="5.3" width="4" height="1.1" fill="#3a3a3a"/></svg><svg style="display:inline-block;vertical-align:0.4px;margin-left:3.8px" width="7" height="7" viewBox="0 0 7 7"><circle cx="3.5" cy="3.5" r="3.1" fill="#8f8f8f"/><rect x="3.0" y="2.9" width="1.1" height="2.5" fill="#fff"/></svg></div>
<div class="t r" style="right:169px;top:483px;font-size:10px;font-weight:bold;letter-spacing:-0.4px;color:#1a1a1a">0,75</div>
<div class="bx" style="left:742px;top:470px;width:140px;height:30px"></div>
<div class="t" style="left:749px;top:468px;font-size:9px;letter-spacing:-0.35px;color:#2e2e2e">Conditionally capable<svg style="display:inline-block;vertical-align:0.5px;margin-left:4.2px" width="10" height="7" viewBox="0 0 10 7"><path d="M0.6 2.6L3.6 4.45L0.6 6.3" fill="none" stroke="#3a3a3a" stroke-width="1.15"/><rect x="5.9" y="3.4" width="4" height="1.1" fill="#3a3a3a"/><rect x="5.9" y="5.3" width="4" height="1.1" fill="#3a3a3a"/></svg><svg style="display:inline-block;vertical-align:0.4px;margin-left:3.8px" width="7" height="7" viewBox="0 0 7 7"><circle cx="3.5" cy="3.5" r="3.1" fill="#8f8f8f"/><rect x="3.0" y="2.9" width="1.1" height="2.5" fill="#fff"/></svg></div>
<div class="t r" style="right:23px;top:483px;font-size:10px;font-weight:bold;letter-spacing:-0.4px;color:#1a1a1a">0,45</div>
<div style="position:absolute;left:1px;top:583px;width:894px;height:1px;background:#fff"></div>
<div style="position:absolute;left:1px;top:584px;width:894px;height:1px;background:#bdbdbd"></div>
<div style="position:absolute;left:1px;top:585px;width:894px;height:33px;background:#e9e9e9"></div>
<div style="position:absolute;left:756px;top:591px;width:63px;height:20px;background:#fff;border:1px solid #b9b9b9;border-radius:2px"></div>
<svg style="position:absolute;left:760px;top:596px" width="12" height="10" viewBox="0 0 12 10"><path d="M1.5 0.5L10.5 9.5M10.5 0.5L1.5 9.5" stroke="#d8363f" stroke-width="1.6"/></svg>
<div class="t" style="left:781px;top:592px;font-size:10px;color:#1a1a1a;letter-spacing:-0.35px"><u>C</u>ancel</div>
<div style="position:absolute;left:824px;top:591px;width:64px;height:20px;background:#5cb82a;border-radius:3px"></div>
<div class="t" style="left:851px;top:592px;font-size:10px;color:#eaffdd"><u>O</u>k</div>
</body></html>
